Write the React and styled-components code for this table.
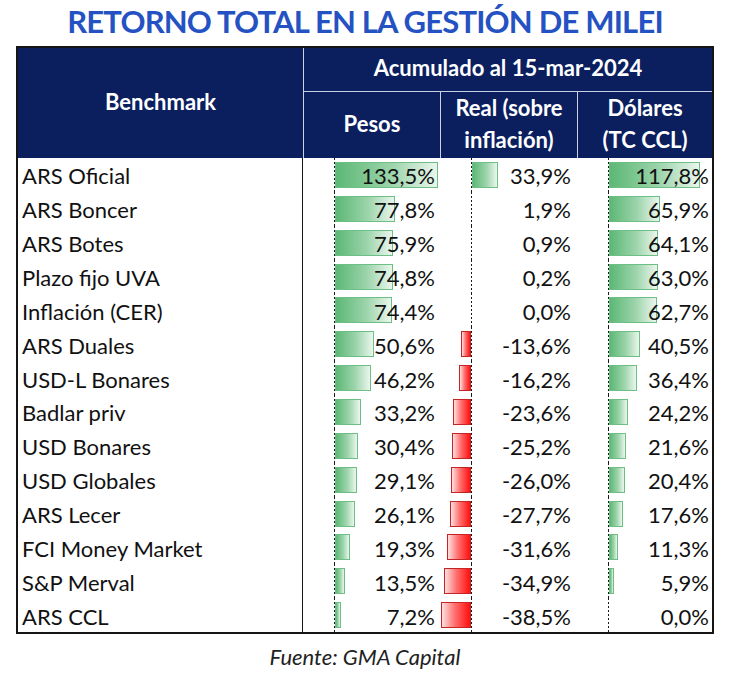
import styled, { createGlobalStyle } from "styled-components";

const GlobalStyle = createGlobalStyle`
  body {
    margin: 0;
    background: #ffffff;
    font-family: Lato, "Liberation Sans", sans-serif;
  }
`;

const SCALE = 0.77;
const AXIS = 31;

const rows = [
  ["ARS Oficial", 133.5, 33.9, 117.8],
  ["ARS Boncer", 77.8, 1.9, 65.9],
  ["ARS Botes", 75.9, 0.9, 64.1],
  ["Plazo fijo UVA", 74.8, 0.2, 63.0],
  ["Inflación (CER)", 74.4, 0.0, 62.7],
  ["ARS Duales", 50.6, -13.6, 40.5],
  ["USD-L Bonares", 46.2, -16.2, 36.4],
  ["Badlar priv", 33.2, -23.6, 24.2],
  ["USD Bonares", 30.4, -25.2, 21.6],
  ["USD Globales", 29.1, -26.0, 20.4],
  ["ARS Lecer", 26.1, -27.7, 17.6],
  ["FCI Money Market", 19.3, -31.6, 11.3],
  ["S&P Merval", 13.5, -34.9, 5.9],
  ["ARS CCL", 7.2, -38.5, 0.0],
];

const Page = styled.div`
  width: 730px;
  padding-top: 3px;
`;

const Title = styled.h1`
  margin: 0;
  text-align: center;
  font-family: Lato, "Liberation Sans", sans-serif;
  font-weight: 700;
  font-size: 31px;
  letter-spacing: -0.8px;
  line-height: 36px;
  color: #2552c2;
`;

const Table = styled.div`
  box-sizing: border-box;
  width: 698px;
  margin: 7px 0 0 16px;
  border: 2px solid #151515;
`;

const Header = styled.div`
  display: grid;
  grid-template-columns: 285px 137px 137px 135px;
  grid-template-rows: 43px 67px;
  background: #0b1f5f;
  color: #ffffff;
  font-weight: 700;
  font-size: 22px;
`;

const HeadCell = styled.div`
  box-sizing: border-box;
  display: flex;
  flex-direction: column;
  align-items: center;
  justify-content: center;
  line-height: 32px;
  padding-bottom: 3px;
  grid-row: ${(p) => p.$row || "auto"};
  grid-column: ${(p) => p.$col || "auto"};
  border-left: ${(p) => (p.$first ? "none" : "1px solid #c9d0e4")};
  border-top: ${(p) => (p.$sub ? "1px solid #c9d0e4" : "none")};
`;

const Row = styled.div`
  display: grid;
  grid-template-columns: 285px 137px 137px 135px;
  height: 33.86px;
  font-size: 22px;
  color: #111111;
`;

const NameCell = styled.div`
  display: flex;
  align-items: center;
  padding: 2px 0 0 4px;
  border-right: 1px solid #151515;
`;

const ValueCell = styled.div`
  position: relative;
  display: flex;
  align-items: center;
  justify-content: flex-end;
  padding-top: 2px;
  padding-right: ${(p) => p.$pad}px;

  &::after {
    content: "";
    position: absolute;
    top: 0;
    bottom: 0;
    left: ${(p) => p.$axis}px;
    width: 1px;
    background: repeating-linear-gradient(
      to bottom,
      #1a1a1a 0 2px,
      transparent 2px 4px
    );
    z-index: 2;
  }
`;

const Bar = styled.div`
  position: absolute;
  top: 4px;
  height: 26px;
  box-sizing: border-box;
  border: 1px solid ${(p) => (p.$neg ? "#c42424" : "#6dbf85")};
  background: ${(p) =>
    p.$neg
      ? "linear-gradient(90deg, #fde0e0 0%, #ff7070 45%, #ff1010 100%)"
      : "linear-gradient(90deg, #5cb875 0%, #9cd4ab 55%, #eaf6ed 100%)"};
  z-index: 1;
`;

const Value = styled.span`
  position: relative;
  z-index: 3;
`;

const Footer = styled.div`
  margin-top: 9px;
  text-align: center;
  font-style: italic;
  font-size: 22px;
  color: #222222;
`;

const fmt = (v) => v.toFixed(1).replace(".", ",") + "%";

const Cell = ({ value, pad }) => {
  const w = Math.abs(value) * SCALE;
  const showBar = w >= 2;
  const neg = value < 0;
  return (
    <ValueCell $axis={AXIS} $pad={pad}>
      {showBar && (
        <Bar
          $neg={neg}
          style={{ left: neg ? AXIS - w : AXIS + 1, width: w }}
        />
      )}
      <Value>{fmt(value)}</Value>
    </ValueCell>
  );
};

export default function App() {
  return (
    <Page>
      <GlobalStyle />
      <Title>RETORNO TOTAL EN LA GESTIÓN DE MILEI</Title>
      <Table>
        <Header>
          <HeadCell $first $row="1 / 3" $col="1">
            Benchmark
          </HeadCell>
          <HeadCell $row="1" $col="2 / 5">
            Acumulado al 15-mar-2024
          </HeadCell>
          <HeadCell $sub>Pesos</HeadCell>
          <HeadCell $sub>
            <span>Real (sobre</span>
            <span>inflación)</span>
          </HeadCell>
          <HeadCell $sub>
            <span>Dólares</span>
            <span>(TC CCL)</span>
          </HeadCell>
        </Header>
        {rows.map(([name, pesos, real, usd]) => (
          <Row key={name}>
            <NameCell>{name}</NameCell>
            <Cell value={pesos} pad={5} />
            <Cell value={real} pad={6} />
            <Cell value={usd} pad={3} />
          </Row>
        ))}
      </Table>
      <Footer>Fuente: GMA Capital</Footer>
    </Page>
  );
}
